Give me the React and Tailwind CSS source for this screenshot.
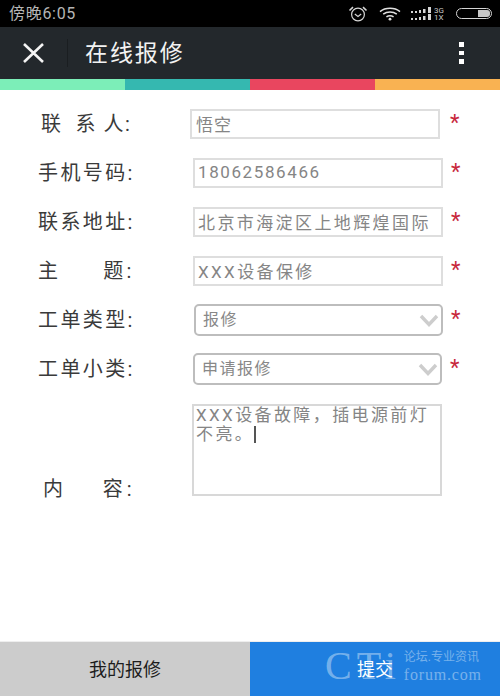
import React from "react";

const FONT = "font-['Roboto','Noto_Sans_CJK_SC',sans-serif]";

function Star({ className = "" }) {
  return <span className={`text-[#c8283c] text-[22px] leading-none h-[18px] mb-[6px] ${className}`}>*</span>;
}

function Row({ label, labelClass = "", children, starClass = "ml-[10px]", rowClass = "" }) {
  return (
    <div className={`flex items-center ${rowClass}`}>
      <div className={`text-[20px] text-[#3a3a3a] leading-none whitespace-pre ${labelClass}`}>{label}</div>
      {children}
      <Star className={starClass} />
    </div>
  );
}

function Field({ value, className = "", tracking = "tracking-[2.4px]" }) {
  return (
    <input
      readOnly
      value={value}
      className={`h-[30px] w-[250px] border-2 border-[#dedede] bg-white px-[3px] pb-[2px] text-[17px] text-[#858585] outline-none ${tracking} ${className}`}
    />
  );
}

function Select({ value, className = "" }) {
  return (
    <div className={`h-[32px] w-[249px] rounded-[5px] border-2 border-[#bdbdbd] bg-white pl-[7px] pr-[2px] flex items-center justify-between ${className}`}>
      <span className="text-[16px] text-[#888] tracking-[1.5px]">{value}</span>
      <svg width="20" height="13" viewBox="0 0 20 13" fill="none">
        <path d="M2 2 L10 10.5 L18 2" stroke="#cdcdcd" strokeWidth="3.4" />
      </svg>
    </div>
  );
}

export default function App() {
  return (
    <div className={`h-[696px] w-[500px] overflow-hidden bg-white flex flex-col ${FONT}`}>
      {/* status bar */}
      <div className="h-[27px] bg-black flex items-center pl-[9px] pr-[8px]">
        <span className="text-[16px] leading-none text-[#b5b5b5] tracking-[0.7px]">傍晚6:05</span>
        <div className="ml-auto flex items-center">
          <svg width="20" height="16" viewBox="0 0 20 16" fill="none" stroke="#d5d5d5" strokeWidth="1.2">
            <circle cx="10" cy="8.5" r="6.4" />
            <path d="M6.8 8 L10 10.5 L13.2 8" />
            <path d="M1.5 4.5 L5 1.2 M18.5 4.5 L15 1.2" strokeWidth="1.6" />
          </svg>
          <svg className="ml-[11px]" width="22" height="14" viewBox="0 0 22 14" fill="none" stroke="#e0e0e0" strokeWidth="1.5">
            <path d="M1 4.6 C6.5 0.2 15.5 0.2 21 4.6" />
            <path d="M4.2 7.2 C8 4.4 14 4.4 17.8 7.2" />
            <path d="M7.4 9.8 C9.6 8.4 12.4 8.4 14.6 9.8" />
            <circle cx="11" cy="12.2" r="1.4" fill="#e0e0e0" stroke="none" />
          </svg>
          <svg className="ml-[10px]" width="21" height="14" viewBox="0 0 21 14" fill="#d5d5d5">
            <rect x="0" y="4" width="2" height="2" /><rect x="4" y="4" width="2" height="2" /><rect x="8" y="3" width="2" height="3" /><rect x="12" y="2" width="2.5" height="4" /><rect x="17" y="0" width="3" height="6" />
            <rect x="0" y="11" width="2" height="2" /><rect x="4" y="11" width="2" height="2" /><rect x="8" y="10" width="2" height="3" /><rect x="12" y="9" width="2.5" height="4" /><rect x="17" y="7" width="3" height="6" />
          </svg>
          <div className="ml-[2px] flex flex-col text-[8px] leading-[7px] text-[#c8c8c8] w-[13px]">
            <span>3G</span>
            <span>1X</span>
          </div>
          <div className="ml-[9px] h-[11px] w-[36px] rounded-[6px] border border-[#d5d5d5] flex justify-end items-center pr-[1px]">
            <div className="h-[7px] w-[12px] rounded-r-[3px] bg-[#c8c8c8]" />
          </div>
        </div>
      </div>

      {/* header */}
      <div className="h-[52px] bg-[#23282c] flex items-center">
        <svg className="ml-[22px]" width="23" height="20" viewBox="0 0 23 20" fill="none" stroke="#f4f4f4" strokeWidth="2.6">
          <path d="M2 1 L21 19 M21 1 L2 19" />
        </svg>
        <div className="ml-[22px] h-[28px] w-px bg-[#1a1e21]" />
        <div className="ml-[17px] text-[23px] leading-none tracking-[1.9px] text-[#f2f2f2]">在线报修</div>
        <div className="ml-auto mr-[36px] flex flex-col gap-[4px]">
          <div className="h-[5px] w-[5px] bg-white" />
          <div className="h-[4px] w-[5px] bg-white" />
          <div className="h-[5px] w-[5px] bg-white" />
        </div>
      </div>

      {/* colour strip */}
      <div className="h-[11px] flex">
        <div className="flex-1 bg-[#7ceeb8]" />
        <div className="flex-1 bg-[#35b8b0]" />
        <div className="flex-1 bg-[#e9465f]" />
        <div className="flex-1 bg-[#f9b252]" />
      </div>

      {/* form */}
      <div className="flex flex-col gap-[19px] pt-[19px]">
        <Row label="联  系 人:" labelClass="ml-[41px] w-[149px] tracking-[1.5px]">
          <input
            readOnly
            value="悟空"
            className="h-[30px] w-[250px] border-2 border-[#dedede] bg-white px-[4px] pb-[2px] text-[17px] text-[#858585] tracking-[1px] outline-none"
          />
        </Row>
        <Row label="手机号码:" labelClass="ml-[38px] w-[155px] tracking-[2.4px]" starClass="ml-[8px]">
          <Field value="18062586466" tracking="tracking-[1.6px]" />
        </Row>
        <Row label="联系地址:" labelClass="ml-[38px] w-[155px] tracking-[2.4px]" starClass="ml-[8px]">
          <Field value="北京市海淀区上地辉煌国际" />
        </Row>
        <Row label="主     题:" labelClass="ml-[38px] w-[155px] tracking-[3.4px]" starClass="ml-[8px]">
          <Field value="XXX设备保修" />
        </Row>
        <Row label="工单类型:" labelClass="ml-[38px] w-[156px] tracking-[2.4px]" starClass="ml-[8px]" rowClass="-mt-[1px]">
          <Select value="报修" />
        </Row>
        <Row label="工单小类:" labelClass="ml-[38px] w-[155px] tracking-[2.4px]" starClass="ml-[8px]" rowClass="-mt-[2px]">
          <Select value="申请报修" />
        </Row>
        <div className="flex items-end">
          <div className="ml-[43px] w-[149px] -mb-[3px] text-[20px] leading-none text-[#3a3a3a] whitespace-pre tracking-[4px]">内    容:</div>
          <div className="h-[92px] w-[250px] border-2 border-[#d8d8d8] bg-white pl-[2px] text-[17px] leading-[19px] tracking-[2.4px] text-[#858585]">
            XXX设备故障，插电源前灯
            <br />
            不亮。
            <span className="inline-block h-[17px] w-[2px] bg-[#555] align-[-3px]" />
          </div>
        </div>
      </div>

      {/* bottom bar */}
      <div className="relative mt-auto h-[55px] flex border-t border-[#eeeeee]">
        <div className="w-[250px] bg-[#cccccc] flex items-center justify-center text-[18px] text-[#1c1c1c]">我的报修</div>
        <div className="w-[250px] bg-[#1f7fe0] flex items-center justify-center text-[18px] text-white">提交</div>
        {/* watermark */}
        <div className="absolute left-[325px] top-0 flex items-center text-white/40 whitespace-nowrap">
          <span className="font-['Liberation_Serif',serif] text-[40px] leading-[48px] tracking-[5px]">CTi</span>
          <div className="ml-[3px] flex flex-col">
            <span className="text-[12px] leading-[18px]">论坛.专业资讯</span>
            <span className="font-['Liberation_Serif',serif] text-[16px] leading-[18px] tracking-[0.8px]">forum.com</span>
          </div>
        </div>
      </div>
    </div>
  );
}
